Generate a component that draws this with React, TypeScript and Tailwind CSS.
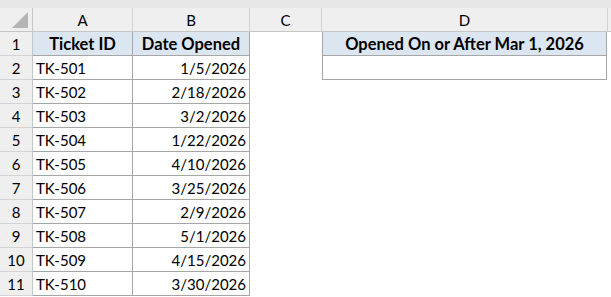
import React from "react";

const rows: [string, string][] = [
  ["TK-501", "1/5/2026"],
  ["TK-502", "2/18/2026"],
  ["TK-503", "3/2/2026"],
  ["TK-504", "1/22/2026"],
  ["TK-505", "4/10/2026"],
  ["TK-506", "3/25/2026"],
  ["TK-507", "2/9/2026"],
  ["TK-508", "5/1/2026"],
  ["TK-509", "4/15/2026"],
  ["TK-510", "3/30/2026"],
];

export default function App() {
  const font = { fontFamily: "Lato, 'Noto Sans', sans-serif" };
  return (
    <div className="w-[611px] h-[297px] overflow-hidden bg-white text-[15px] text-black" style={font}>
      <div className="h-[8px] bg-[#e6e6e6]" />
      {/* column header */}
      <div className="flex h-[24px] bg-[#efefef] border-b border-[#c6c6c6]">
        <div className="w-[33px] shrink-0 border-r border-[#c6c6c6] relative">
          <svg className="absolute right-[4px] bottom-[3px]" width="16" height="16" viewBox="0 0 16 16">
            <polygon points="16,0 16,16 0,16" fill="#b4b4b4" />
          </svg>
        </div>
        <div className="w-[100px] shrink-0 border-r border-[#d4d4d4] flex items-center justify-center pt-[1px]">A</div>
        <div className="w-[117px] shrink-0 border-r border-[#d4d4d4] flex items-center justify-center pt-[1px]">B</div>
        <div className="w-[72px] shrink-0 border-r border-[#d4d4d4] flex items-center justify-center pt-[1px]">C</div>
        <div className="w-[286px] shrink-0 border-r border-[#d4d4d4] flex items-center justify-center pt-[1px]">D</div>
        <div className="flex-1" />
      </div>
      <div className="flex">
        {/* row header */}
        <div className="w-[33px] shrink-0 bg-[#efefef] border-r border-[#c6c6c6] flex flex-col">
          {Array.from({ length: 11 }, (_, i) => (
            <div key={i} className="h-[24px] flex items-center justify-center border-b border-[#d4d4d4] pt-[1px]">
              {i + 1}
            </div>
          ))}
        </div>
        {/* table A:B */}
        <div className="flex flex-col">
          <div className="flex h-[24px] bg-[#dce6f1] font-bold text-[16.5px] border-b border-[#a6a6a6]">
            <div className="w-[100px] border-r border-[#a6a6a6] flex items-center justify-center pt-[1px]">Ticket ID</div>
            <div className="w-[117px] border-r border-[#a6a6a6] flex items-center justify-center pt-[1px]">Date Opened</div>
          </div>
          {rows.map(([id, d]) => (
            <div key={id} className="flex h-[24px] border-b border-[#a6a6a6]">
              <div className="w-[100px] border-r border-[#a6a6a6] flex items-center px-[3px] pt-[1px]">{id}</div>
              <div className="w-[117px] border-r border-[#a6a6a6] flex items-center justify-end px-[3px] pt-[1px]">{d}</div>
            </div>
          ))}
        </div>
        <div className="w-[72px] shrink-0" />
        <div className="flex flex-col">
          <div className="w-[285px] h-[24px] bg-[#dce6f1] font-bold text-[16.5px] border-l border-r border-b border-[#a6a6a6] flex items-center justify-center pt-[1px]">
            Opened On or After Mar 1, 2026
          </div>
          <div className="w-[285px] h-[24px] border-l border-r border-b border-[#a6a6a6]" />
        </div>
      </div>
    </div>
  );
}
